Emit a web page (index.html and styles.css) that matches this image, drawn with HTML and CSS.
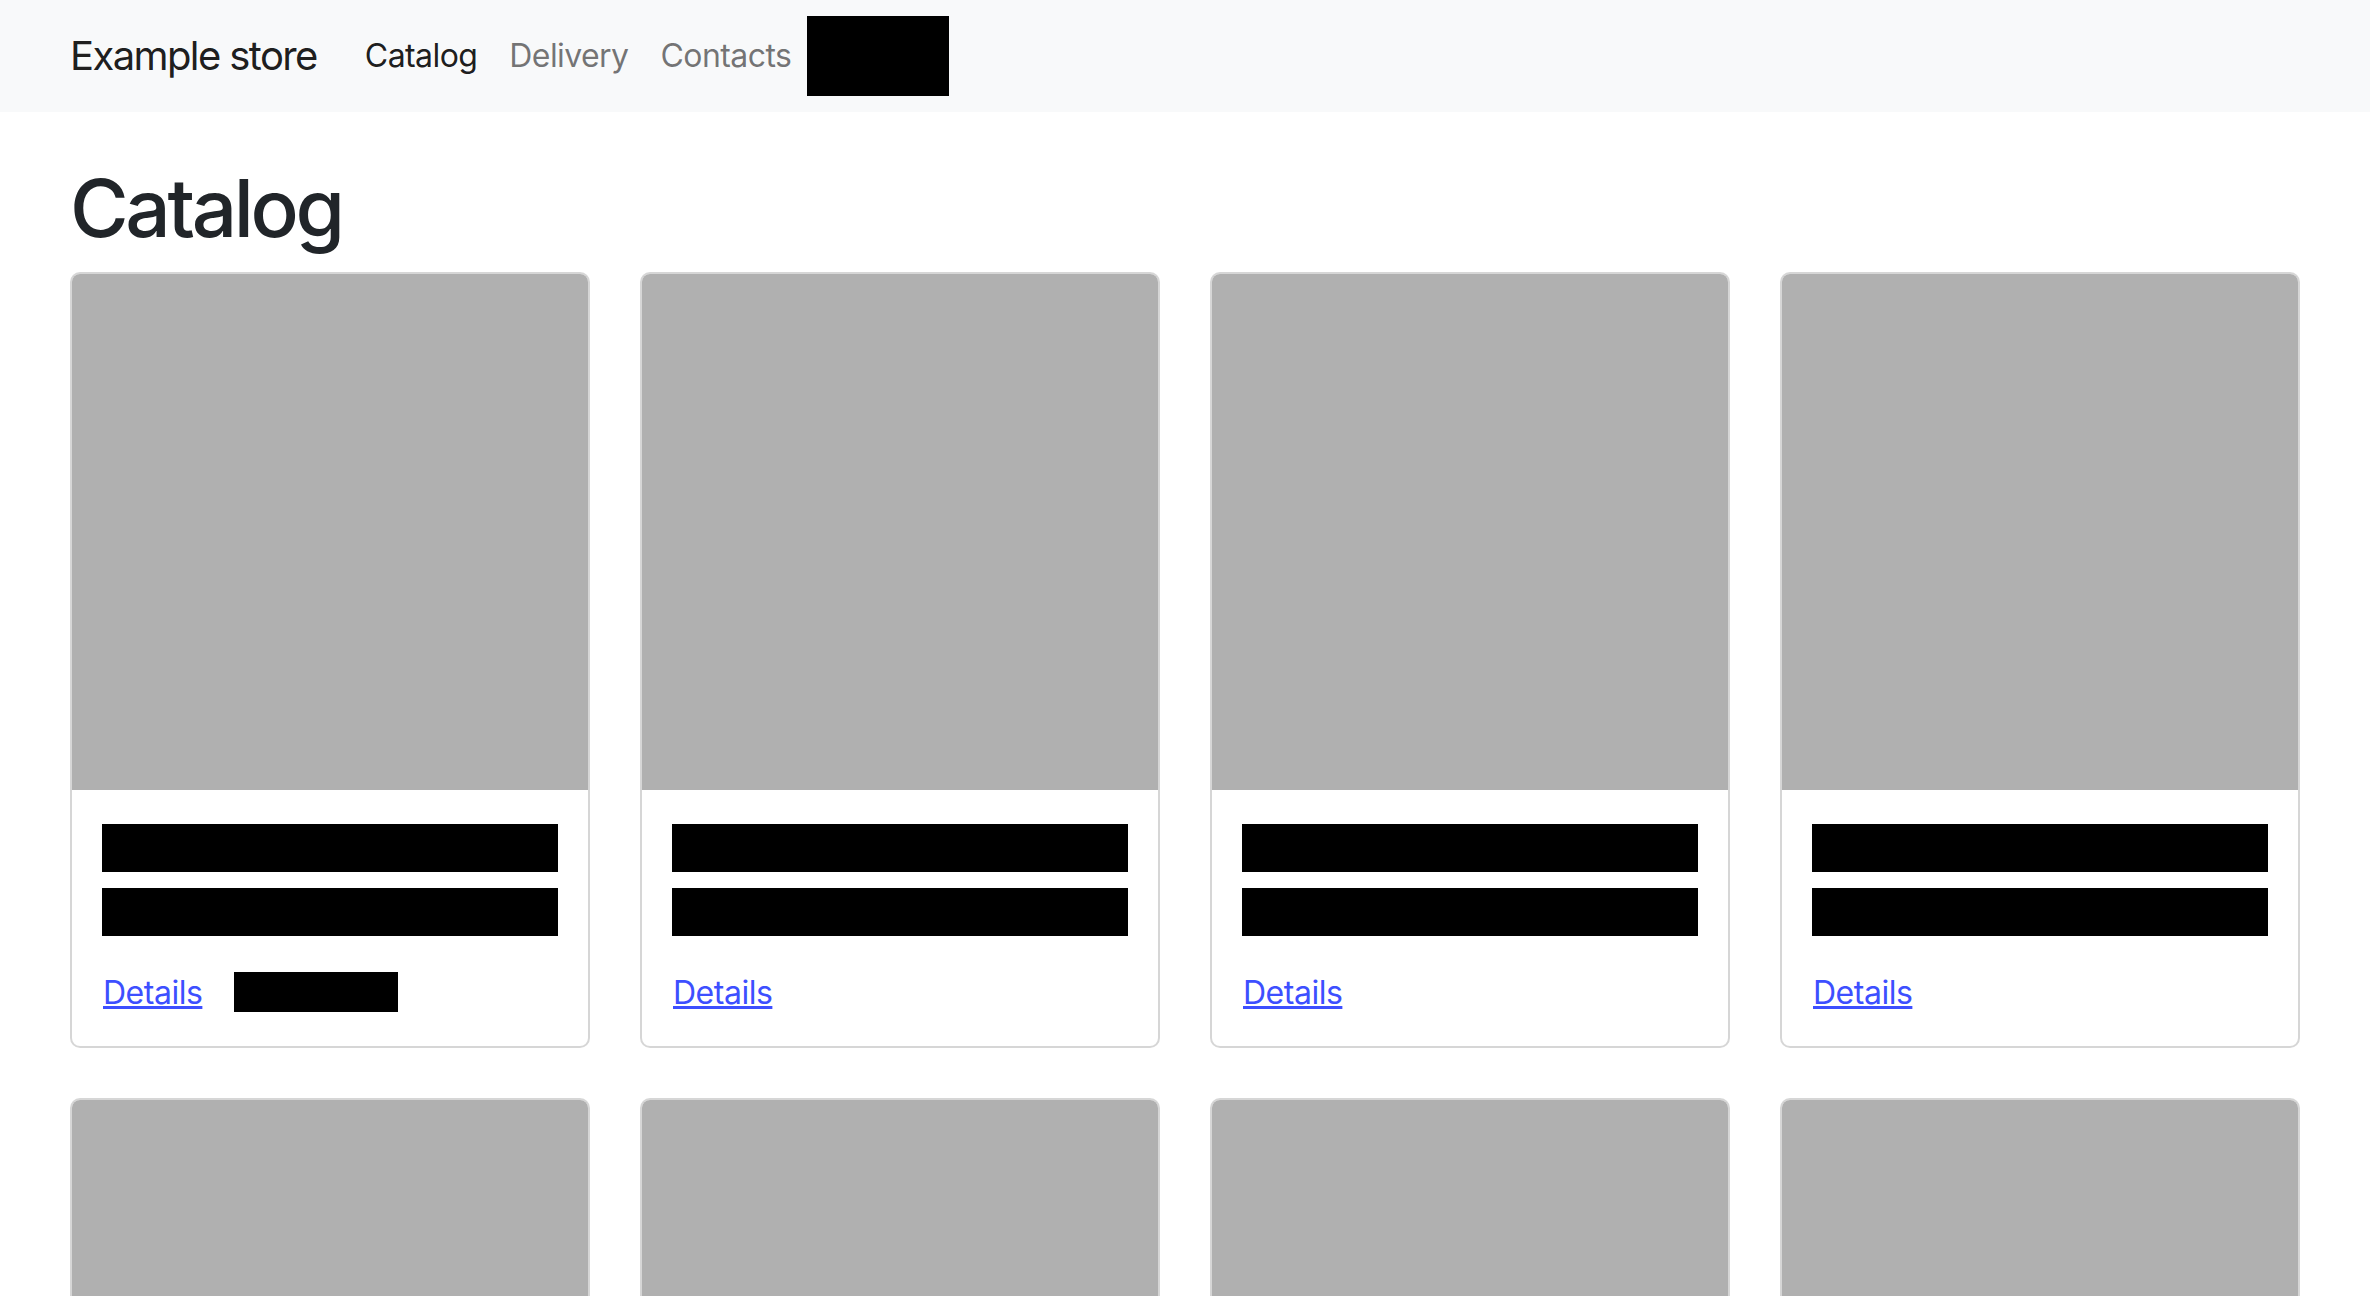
FILE: index.html
```html
<!DOCTYPE html>
<html lang="en">
<head>
    <meta charset="UTF-8">
    <meta name="viewport" content="width=device-width, initial-scale=1.0">
    <title>Example store</title>
    <link rel="stylesheet" href="styles.css">
</head>
<body>
    <nav class="navbar">
        <a class="brand" href="#">Example store</a>
        <ul class="nav-links">
            <li><a class="nav-link active" href="#">Catalog</a></li>
            <li><a class="nav-link" href="#">Delivery</a></li>
            <li><a class="nav-link" href="#">Contacts</a></li>
        </ul>
        <div class="hidden-block"></div>
    </nav>

    <main class="page">
        <h1>Catalog</h1>
        <div class="catalog">
            <div class="card">
                <div class="card-img"></div>
                <div class="card-body">
                    <div class="redacted title"></div>
                    <div class="redacted text"></div>
                    <div class="card-actions">
                        <a href="#">Details</a>
                        <span class="redacted price"></span>
                    </div>
                </div>
            </div>
            <div class="card">
                <div class="card-img"></div>
                <div class="card-body">
                    <div class="redacted title"></div>
                    <div class="redacted text"></div>
                    <div class="card-actions">
                        <a href="#">Details</a>
                    </div>
                </div>
            </div>
            <div class="card">
                <div class="card-img"></div>
                <div class="card-body">
                    <div class="redacted title"></div>
                    <div class="redacted text"></div>
                    <div class="card-actions">
                        <a href="#">Details</a>
                    </div>
                </div>
            </div>
            <div class="card">
                <div class="card-img"></div>
                <div class="card-body">
                    <div class="redacted title"></div>
                    <div class="redacted text"></div>
                    <div class="card-actions">
                        <a href="#">Details</a>
                    </div>
                </div>
            </div>
            <div class="card">
                <div class="card-img"></div>
                <div class="card-body">
                    <div class="redacted title"></div>
                    <div class="redacted text"></div>
                    <div class="card-actions">
                        <a href="#">Details</a>
                    </div>
                </div>
            </div>
            <div class="card">
                <div class="card-img"></div>
                <div class="card-body">
                    <div class="redacted title"></div>
                    <div class="redacted text"></div>
                    <div class="card-actions">
                        <a href="#">Details</a>
                    </div>
                </div>
            </div>
            <div class="card">
                <div class="card-img"></div>
                <div class="card-body">
                    <div class="redacted title"></div>
                    <div class="redacted text"></div>
                    <div class="card-actions">
                        <a href="#">Details</a>
                    </div>
                </div>
            </div>
            <div class="card">
                <div class="card-img"></div>
                <div class="card-body">
                    <div class="redacted title"></div>
                    <div class="redacted text"></div>
                    <div class="card-actions">
                        <a href="#">Details</a>
                    </div>
                </div>
            </div>
        </div>
    </main>
</body>
</html>
```

FILE: styles.css
```css
* {
    margin: 0;
    padding: 0;
    box-sizing: border-box;
}

body {
    font-family: Inter, "Liberation Sans", sans-serif;
    color: #212529;
    background-color: #fff;
}

/* barra superior */
.navbar {
    display: flex;
    align-items: center;
    height: 112px;
    padding: 16px 70px;
    background-color: #f8f9fa;
}

.brand {
    font-size: 40px;
    line-height: 60px;
    letter-spacing: -0.04em;
    padding: 10px 0;
    margin-right: 32px;
    color: rgba(0, 0, 0, 0.9);
    text-decoration: none;
}

.nav-links {
    display: flex;
    list-style: none;
}

.nav-link {
    display: block;
    font-size: 32px;
    line-height: 48px;
    letter-spacing: -0.018em;
    padding: 16px;
    color: rgba(0, 0, 0, 0.55);
    text-decoration: none;
}

.nav-link.active {
    color: rgba(0, 0, 0, 0.9);
}

.hidden-block {
    width: 142px;
    height: 80px;
    background: #000;
}

/* contenido */
.page {
    padding: 48px 70px 0;
}

h1 {
    font-size: 80px;
    font-weight: 500;
    line-height: 96px;
    letter-spacing: -0.042em;
    margin-bottom: 16px;
}

.catalog {
    display: grid;
    grid-template-columns: repeat(4, 1fr);
    gap: 50px;
}

.card {
    border: 2px solid rgba(0, 0, 0, 0.16);
    border-radius: 10px;
    overflow: hidden;
}

.card-img {
    aspect-ratio: 1 / 1;
    background-color: #b0b0b0;
}

.card-body {
    padding: 34px 30px 30px;
}

.redacted {
    background: #000;
}

.title, .text {
    height: 48px;
}

.title {
    margin-bottom: 16px;
}

.text {
    margin-bottom: 32px;
}

.card-actions {
    display: flex;
    align-items: center;
    gap: 32px;
    height: 48px;
    padding-left: 1px;
}

.card-actions a {
    font-size: 32px;
    letter-spacing: -0.015em;
    color: #3d4fff;
}

.price {
    width: 164px;
    height: 40px;
}
```
